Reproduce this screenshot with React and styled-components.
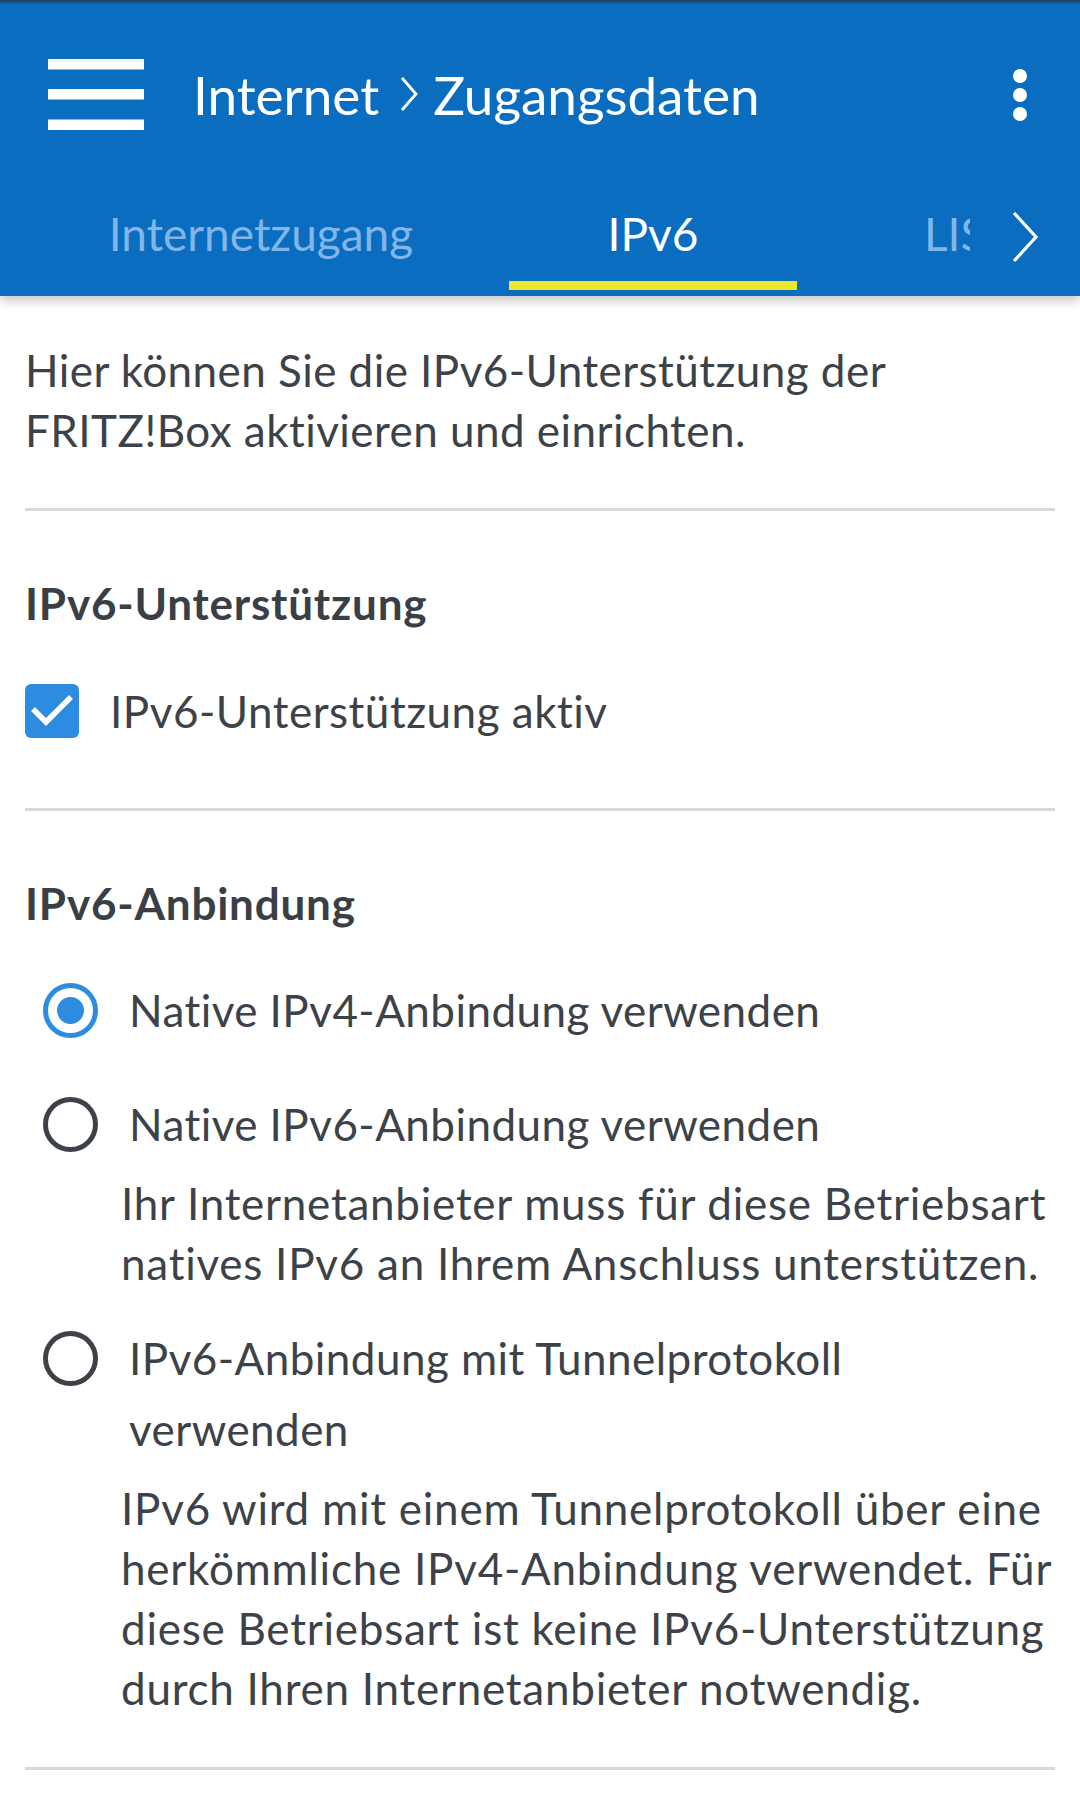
import React from "react";
import styled, { createGlobalStyle } from "styled-components";

const GlobalStyle = createGlobalStyle`
  html, body {
    margin: 0;
    padding: 0;
    background: #ffffff;
  }
  body {
    font-family: Lato, "Noto Sans", sans-serif;
    color: #3d4248;
  }
`;

const BLUE = "#0a6dbf";

const Page = styled.div`
  width: 1080px;
  min-height: 1800px;
  background: #ffffff;
`;

const AppBar = styled.header`
  position: relative;
  z-index: 2;
  background: linear-gradient(#1d3f60 0, ${BLUE} 5px);
  box-shadow: 0 5px 10px rgba(0, 0, 0, 0.22);
`;

const Toolbar = styled.div`
  height: 184px;
  display: flex;
  align-items: center;
  padding: 4px 0 0 48px;
  box-sizing: border-box;
`;

const IconButton = styled.button`
  border: 0;
  padding: 0;
  background: none;
  display: flex;
  align-items: center;
  justify-content: center;
  color: #ffffff;
  cursor: pointer;
`;

const Title = styled.h1`
  margin: 0 0 0 49px;
  flex: 1;
  display: flex;
  align-items: center;
  font-size: 53px;
  font-weight: 400;
  color: #ffffff;
  white-space: nowrap;
`;

const Crumb = styled.span`
  display: inline-block;
`;

const Separator = styled.svg`
  margin: 0 14px 0 20px;
`;

const Kebab = styled.div`
  display: flex;
  flex-direction: column;
  gap: 5px;
  margin-right: 53px;
  padding-top: 2px;
`;

const Dot = styled.span`
  width: 14px;
  height: 14px;
  border-radius: 50%;
  background: #ffffff;
`;

const TabRow = styled.div`
  height: 112px;
  display: flex;
`;

const TabViewport = styled.div`
  flex: 1;
  overflow: hidden;
`;

const TabStrip = styled.div`
  display: flex;
  margin-left: 13px;
  height: 106px;
`;

const Tab = styled.div`
  position: relative;
  flex: none;
  width: ${(p) => p.$width}px;
  padding-left: ${(p) => p.$indent || 0}px;
  box-sizing: border-box;
  display: flex;
  align-items: center;
  justify-content: ${(p) => (p.$indent ? "flex-start" : "center")};
  padding-bottom: 8px;
  font-size: 46px;
  color: ${(p) => (p.$active ? "#ffffff" : "#82b6e8")};
  white-space: nowrap;

  &::after {
    content: "";
    display: ${(p) => (p.$active ? "block" : "none")};
    position: absolute;
    left: 0;
    right: 0;
    bottom: 0;
    height: 9px;
    background: #eee82c;
  }
`;

const ScrollButton = styled(IconButton)`
  width: 110px;
  height: 106px;
  background: ${BLUE};
`;

const Content = styled.main`
  padding: 44px 25px 0;
`;

const Intro = styled.p`
  margin: 0;
  font-size: 44px;
  letter-spacing: 0.45px;
  line-height: 60px;
  white-space: nowrap;
`;

const Divider = styled.hr`
  margin: ${(p) => p.$top}px 0 0;
  border: 0;
  height: 3px;
  background: #d8d8d8;
`;

const SectionTitle = styled.h2`
  margin: 62px 0 0;
  font-size: 44px;
  letter-spacing: 0.8px;
  line-height: 60px;
  font-weight: 700;
  color: #3a3f45;
`;

const CheckRow = styled.label`
  display: flex;
  align-items: center;
  gap: 31px;
  margin-top: 51px;
  font-size: 44px;
  letter-spacing: 0.5px;
`;

const CheckBox = styled.span`
  width: 54px;
  height: 54px;
  border-radius: 6px;
  background: #2d8ce0;
  display: flex;
  align-items: center;
  justify-content: center;
  flex: none;
`;

const Options = styled.div`
  margin-top: 42px;
  display: flex;
  flex-direction: column;
`;

const Option = styled.div`
  padding-bottom: ${(p) => p.$after || 0}px;
`;

const OptionRow = styled.label`
  display: flex;
  align-items: flex-start;
  gap: 31px;
  padding-left: 18px;
  font-size: 44px;
  letter-spacing: 0.45px;
  line-height: 71px;
  white-space: nowrap;
`;

const Radio = styled.span`
  width: 55px;
  height: 55px;
  margin-top: 8px;
  box-sizing: border-box;
  border-radius: 50%;
  border: 5px solid ${(p) => (p.$checked ? "#2d8ce0" : "#3d4248")};
  display: flex;
  align-items: center;
  justify-content: center;
  flex: none;

  &::after {
    content: "";
    display: ${(p) => (p.$checked ? "block" : "none")};
    width: 27px;
    height: 27px;
    border-radius: 50%;
    background: #2d8ce0;
  }
`;

const Description = styled.p`
  margin: 13px 0 0 96px;
  font-size: 44px;
  letter-spacing: 0.75px;
  line-height: 60px;
  white-space: nowrap;
`;

const options = [
  { label: "Native IPv4-Anbindung verwenden", checked: true, after: 43 },
  {
    label: "Native IPv6-Anbindung verwenden",
    after: 30,
    desc: [
      "Ihr Internetanbieter muss für diese Betriebsart",
      "natives IPv6 an Ihrem Anschluss unterstützen.",
    ],
  },
  {
    label: ["IPv6-Anbindung mit Tunnelprotokoll", "verwenden"],
    desc: [
      "IPv6 wird mit einem Tunnelprotokoll über eine",
      "herkömmliche IPv4-Anbindung verwendet. Für",
      "diese Betriebsart ist keine IPv6-Unterstützung",
      "durch Ihren Internetanbieter notwendig.",
    ],
  },
];

const lines = (arr) =>
  [].concat(arr).map((l, i) => (
    <React.Fragment key={i}>
      {i > 0 && <br />}
      {l}
    </React.Fragment>
  ));

export default function App() {
  return (
    <Page>
      <GlobalStyle />
      <AppBar>
        <Toolbar>
          <IconButton aria-label="Menü">
            <svg width="96" height="71" viewBox="0 0 96 71">
              <rect x="0" y="0" width="96" height="10.5" fill="#fff" />
              <rect x="0" y="30" width="96" height="10.5" fill="#fff" />
              <rect x="0" y="60.5" width="96" height="10.5" fill="#fff" />
            </svg>
          </IconButton>
          <Title>
            <Crumb>Internet</Crumb>
            <Separator width="20" height="34" viewBox="0 0 20 34">
              <path d="M3 1 L17 17 L3 33" fill="none" stroke="#fff" strokeWidth="2.8" />
            </Separator>
            <Crumb>Zugangsdaten</Crumb>
          </Title>
          <Kebab>
            <Dot />
            <Dot />
            <Dot />
          </Kebab>
        </Toolbar>
        <TabRow>
          <TabViewport>
            <TabStrip>
              <Tab $width={496}>Internetzugang</Tab>
              <Tab $width={288} $active>
                IPv6
              </Tab>
              <Tab $width={300} $indent={127}>
                LISP
              </Tab>
            </TabStrip>
          </TabViewport>
          <ScrollButton aria-label="Weiter">
            <svg width="28" height="52" viewBox="0 0 28 52">
              <path d="M3 2 L25 26 L3 50" fill="none" stroke="#fff" strokeWidth="3.2" />
            </svg>
          </ScrollButton>
        </TabRow>
      </AppBar>

      <Content>
        <Intro>
          Hier können Sie die IPv6-Unterstützung der
          <br />
          FRITZ!Box aktivieren und einrichten.
        </Intro>
        <Divider $top={48} />

        <SectionTitle>IPv6-Unterstützung</SectionTitle>
        <CheckRow>
          <CheckBox>
            <svg width="54" height="54" viewBox="0 0 54 54">
              <path d="M8 25 L21 38 L46 13" fill="none" stroke="#fff" strokeWidth="5.5" />
            </svg>
          </CheckBox>
          IPv6-Unterstützung aktiv
        </CheckRow>
        <Divider $top={70} />

        <SectionTitle>IPv6-Anbindung</SectionTitle>
        <Options>
          {options.map((o, i) => (
            <Option key={i} $after={o.after}>
              <OptionRow>
                <Radio $checked={o.checked} />
                <span>{lines(o.label)}</span>
              </OptionRow>
              {o.desc && <Description>{lines(o.desc)}</Description>}
            </Option>
          ))}
        </Options>
        <Divider $top={49} />
      </Content>
    </Page>
  );
}
